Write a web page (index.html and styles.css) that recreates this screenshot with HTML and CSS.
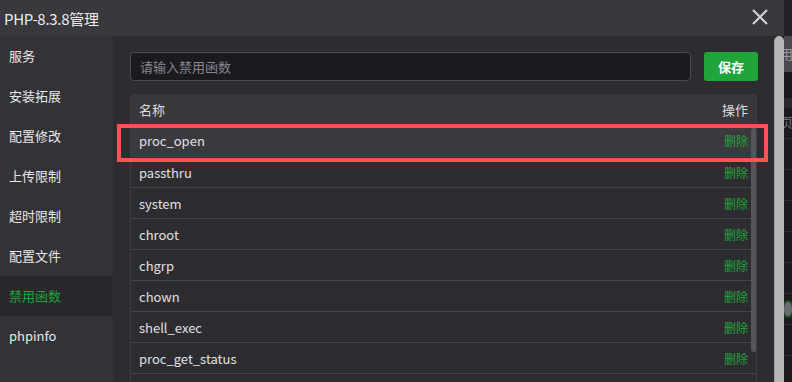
FILE: index.html
```html
<!DOCTYPE html>
<html lang="zh-CN">
<head>
<meta charset="utf-8">
<title>PHP-8.3.8管理</title>
<link rel="stylesheet" href="styles.css">
</head>
<body>
<div class="page">
  <div class="dialog">
    <div class="titlebar">
      <span class="title">PHP-8.3.8管理</span>
      <svg class="close" width="18" height="18" viewBox="0 0 18 18"><path d="M2 2 L16 16 M16 2 L2 16" stroke="#d4d4d6" stroke-width="2" fill="none"/></svg>
    </div>
    <div class="dbody">
      <ul class="sidebar">
        <li>服务</li>
        <li>安装拓展</li>
        <li>配置修改</li>
        <li>上传限制</li>
        <li>超时限制</li>
        <li>配置文件</li>
        <li class="active">禁用函数</li>
        <li>phpinfo</li>
      </ul>
      <div class="content">
        <div class="toolbar">
          <input class="fn-input" type="text" placeholder="请输入禁用函数">
          <button class="btn-save">保存</button>
        </div>
        <div class="table-wrap">
          <div class="row head"><span>名称</span><span>操作</span></div>
          <div class="row hover"><span>proc_open</span><a class="del">删除</a></div>
          <div class="row"><span>passthru</span><a class="del">删除</a></div>
          <div class="row"><span>system</span><a class="del">删除</a></div>
          <div class="row"><span>chroot</span><a class="del">删除</a></div>
          <div class="row"><span>chgrp</span><a class="del">删除</a></div>
          <div class="row"><span>chown</span><a class="del">删除</a></div>
          <div class="row"><span>shell_exec</span><a class="del">删除</a></div>
          <div class="row"><span>proc_get_status</span><a class="del">删除</a></div>
          <div class="row"></div>
          <div class="thumb"></div>
        </div>
      </div>
      <div class="vscroll"></div>
    </div>
  </div>
  <div class="behind">
    <div class="b-top"></div>
    <div class="b-band">用</div>
    <div class="b-dark"></div>
    <div class="b-line"></div>
    <div class="b-row">页</div>
    <div class="b-row"></div>
    <div class="b-row"></div>
    <div class="b-row"></div>
    <div class="b-row"></div>
    <div class="b-row"></div>
    <div class="b-toggle"><span></span></div>
    <div class="b-row"></div>
  </div>
  <div class="mark"></div>
</div>
</body>
</html>
```
FILE: styles.css
```css
* { box-sizing: border-box; }
html, body { margin: 0; padding: 0; }
body {
  width: 792px;
  height: 382px;
  overflow: hidden;
  background: #1c1b20;
  font-family: "Noto Sans CJK SC", "Noto Sans", sans-serif;
  color: #e2e2e4;
}
.page {
  position: relative;
  display: flex;
  width: 792px;
  height: 382px;
}
.dialog {
  width: 784px;
  display: flex;
  flex-direction: column;
  flex: none;
}
.titlebar {
  height: 36px;
  background: #39383d;
  display: flex;
  align-items: center;
  justify-content: space-between;
  padding: 0 15px 0 4px;
}
.title {
  font-size: 15px;
  color: #ececee;
  letter-spacing: -0.3px;
}
.close { display: block; margin-top: -2px; }
.dbody {
  flex: 1;
  display: flex;
  min-height: 0;
}
.sidebar {
  list-style: none;
  margin: 0;
  padding: 0;
  width: 113px;
  background: #333237;
  flex: none;
}
.sidebar li {
  height: 40px;
  line-height: 40px;
  padding-left: 9px;
  font-size: 13px;
  color: #e8e8ea;
}
.sidebar li.active {
  background: #29282d;
  color: #20a53a;
}
.content {
  width: 661px;
  flex: none;
  background: #2d2c31;
  padding: 16px 16px 0 17px;
  overflow: hidden;
}
.toolbar {
  display: flex;
  gap: 13px;
  height: 29px;
}
.fn-input {
  width: 561px;
  height: 29px;
  background: #1b1a1f;
  border: 1px solid #4b4a50;
  border-radius: 4px;
  padding: 0 9px;
  font-family: inherit;
  font-size: 13px;
  color: #e2e2e4;
  outline: none;
}
.fn-input::placeholder { color: #88878d; }
.btn-save {
  width: 54px;
  height: 29px;
  border: 0;
  border-radius: 3px;
  background: #20a53a;
  color: #fff;
  font-family: inherit;
  font-size: 13px;
  font-weight: bold;
  padding: 0;
}
.table-wrap {
  position: relative;
  margin-top: 13px;
  width: 627px;
  border-left: 1px solid #3e3d42;
  border-right: 1px solid #3e3d42;
  border-radius: 4px 4px 0 0;
}
.row {
  height: 31px;
  border-bottom: 1px solid #45444a;
  display: flex;
  align-items: center;
  justify-content: space-between;
  padding: 0 8px 0 8px;
  font-size: 13px;
  color: #e0e0e2;
}
.row.head {
  background: #38373c;
  border-radius: 4px 4px 0 0;
  border-bottom: 0;
  color: #dcdcde;
}
.row.hover { background: #3a393e; height: 32px; }
.del {
  color: #20a53a;
  font-size: 12px;
}
.thumb {
  position: absolute;
  right: 0;
  top: 34px;
  width: 5px;
  height: 224px;
  border-radius: 3px;
  background: #56555b;
}
.vscroll {
  width: 10px;
  flex: none;
  background: #b6b6b8;
  border-radius: 5px 5px 0 0;
  border-left: 1px solid #a3a3a5;
}
.behind {
  flex: 1;
  display: flex;
  flex-direction: column;
  overflow: hidden;
  font-size: 13px;
  color: #8e8d92;
  white-space: nowrap;
}
.b-top { height: 36px; background: #222126; }
.b-band { height: 36px; background: #4a494e; line-height: 36px; color: #9a999e; text-indent: -4px; }
.b-dark { height: 26px; background: #19181d; }
.b-line { height: 10px; background: #29282d; }
.b-row { height: 31px; border-bottom: 1px solid #2e2d32; background: #1b1a1f; line-height: 28px; text-indent: -4px; color: #6f6e73; }
.b-toggle { height: 31px; background: #1b1a1f; display: flex; align-items: center; border-bottom: 1px solid #2e2d32; }
.b-toggle span { width: 14px; height: 14px; border-radius: 50%; background: #6b6a70; box-shadow: 0 0 0 2px #1e4a28; }
.mark {
  position: absolute;
  left: 117px;
  top: 124px;
  width: 651px;
  height: 38px;
  border: 4px solid #fa5353;
  pointer-events: none;
}
```
